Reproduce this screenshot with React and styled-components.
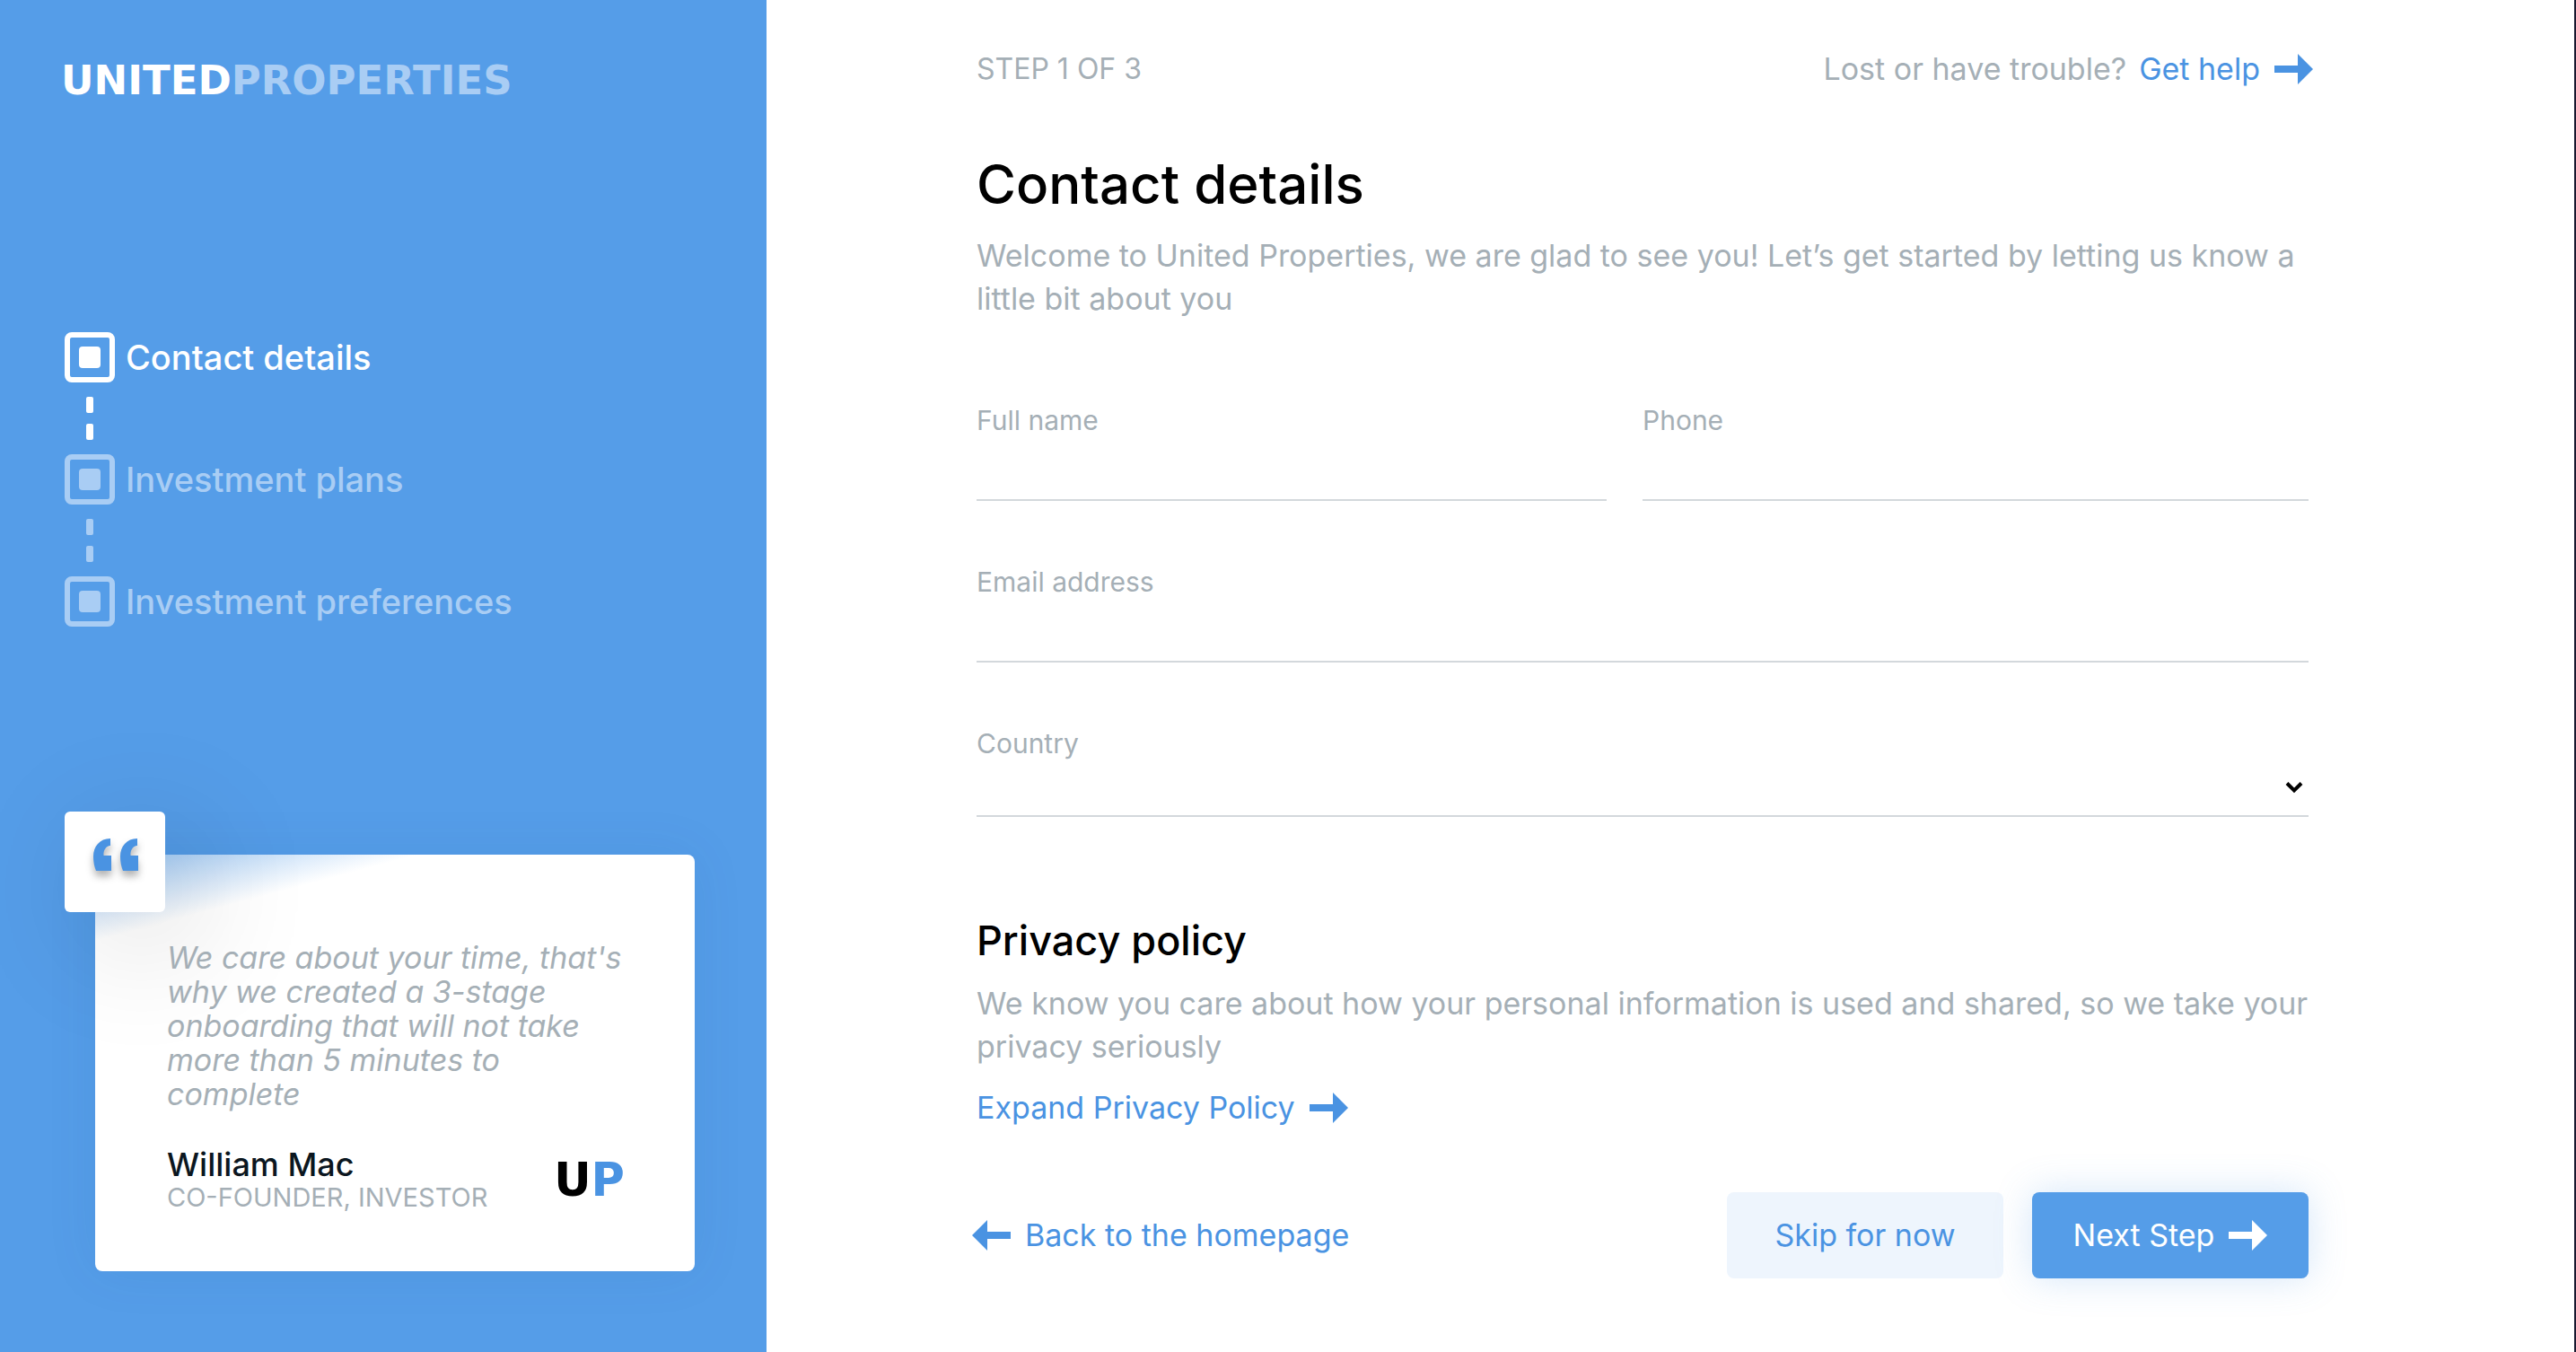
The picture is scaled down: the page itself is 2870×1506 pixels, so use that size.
import React from "react";
import styled, { createGlobalStyle } from "styled-components";

const BLUE = "#559de8";
const LINK = "#4a93e2";
const GREY = "#a5afb6";
const SANS = `Inter, "Liberation Sans", sans-serif`;
const WIDE = `"DejaVu Sans", Inter, sans-serif`;

const GlobalStyle = createGlobalStyle`
  *, *::before, *::after { box-sizing: border-box; }
  body { margin: 0; background: #fff; font-family: ${SANS}; color: #000; }
  h1, h2, p, ol, blockquote { margin: 0; padding: 0; }
  button, input, select { font: inherit; color: inherit; }
`;

const Page = styled.div`
  display: flex;
  min-height: 100vh;
  background: #fff;
  border-right: 2px solid #1a1a30;
`;

const Sidebar = styled.aside`
  flex: 0 0 854px;
  display: flex;
  flex-direction: column;
  background: ${BLUE};
  padding: 64px 80px 90px 68px;
`;

const Logo = styled.div`
  font-family: ${WIDE};
  font-size: 45px;
  line-height: 52px;
  font-weight: 700;
  color: #fff;
  span { color: #a9cdf4; }
`;

const Steps = styled.ol`
  list-style: none;
  margin: 254px 0 0 4px;
  display: flex;
  flex-direction: column;
`;

const Step = styled.li`
  color: ${(p) => (p.$active ? "#fff" : "#a9cdf4")};
`;

const StepLine = styled.div`
  display: flex;
  align-items: center;
  gap: 12px;
  font-size: 38px;
  line-height: 56px;
  font-weight: 500;
`;

const StepBox = styled.span`
  width: 56px;
  height: 56px;
  border: 6px solid currentColor;
  border-radius: 8px;
  display: grid;
  place-items: center;
  &::before {
    content: "";
    width: 24px;
    height: 24px;
    border-radius: 4px;
    background: currentColor;
  }
`;

const Dashes = styled.div`
  width: 56px;
  padding: 16px 0;
  display: flex;
  flex-direction: column;
  align-items: center;
  gap: 12px;
`;

const Dash = styled.span`
  width: 8px;
  height: 18px;
  border-radius: 2px;
  background: currentColor;
`;

const Card = styled.figure`
  position: relative;
  margin: auto 0 0 38px;
  padding: 96px 78px 64px 80px;
  border-radius: 8px;
  background: linear-gradient(165deg, #8fbff1 0%, #fff 15%);
  box-shadow: 0 0 60px rgba(30, 80, 140, 0.08);
`;

const QuoteBadge = styled.div`
  position: absolute;
  left: -34px;
  top: -48px;
  width: 112px;
  height: 112px;
  padding: 0 0 16px 2px;
  border-radius: 6px;
  background: #fff;
  display: grid;
  place-items: center;
  box-shadow: 30px 30px 140px rgba(0, 0, 0, 0.16);
  svg { filter: drop-shadow(0 6px 4px rgba(0, 0, 0, 0.3)); }
`;

const Quote = styled.blockquote`
  position: relative;
  font-size: 34px;
  line-height: 38px;
  font-style: italic;
  color: ${GREY};
`;

const Author = styled.figcaption`
  position: relative;
  margin-top: 40px;
  display: flex;
  align-items: center;
  justify-content: space-between;
`;

const AuthorName = styled.div`
  font-size: 36px;
  line-height: 38px;
  font-weight: 500;
  color: #0b1620;
`;

const AuthorRole = styled.div`
  font-size: 29px;
  line-height: 36px;
  color: ${GREY};
`;

const Mark = styled.div`
  font-family: ${WIDE};
  font-size: 51px;
  line-height: 60px;
  font-weight: 700;
  span { color: ${LINK}; }
`;

const Main = styled.main`
  flex: 1;
  padding: 53px 296px 82px 234px;
  display: flex;
  flex-direction: column;
`;

const TopBar = styled.header`
  display: flex;
  justify-content: space-between;
  font-size: 34px;
  line-height: 48px;
  color: ${GREY};
`;

const StepCount = styled.span`
  font-size: 32px;
`;

const Help = styled.div`
  display: flex;
  gap: 14px;
  margin-right: -5px;
`;

const Link = styled.a`
  display: inline-flex;
  align-items: center;
  align-self: flex-start;
  gap: 16px;
  margin-left: ${(p) => (p.$back ? "-5px" : "0")};
  font-size: 34px;
  line-height: 48px;
  color: ${LINK};
  text-decoration: none;
`;

const Title = styled.h1`
  margin-top: 68px;
  font-size: 60px;
  line-height: 72px;
  font-weight: 500;
`;

const Subtitle = styled.h2`
  margin-top: 112px;
  font-size: 45px;
  line-height: 52px;
  font-weight: 500;
`;

const Text = styled.p`
  margin-top: 20px;
  font-size: 34px;
  line-height: 48px;
  color: ${GREY};
`;

const Fields = styled.form`
  margin-top: 93px;
  display: grid;
  grid-template-columns: 1fr 1fr;
  row-gap: 72px;
`;

const Field = styled.div`
  display: flex;
  flex-direction: column;
  grid-column: ${(p) => (p.$wide ? "1 / -1" : "auto")};
  padding-right: ${(p) => (p.$gutter ? "40px" : "0")};
`;

const Label = styled.label`
  font-size: 30px;
  line-height: 36px;
  color: ${GREY};
`;

const Input = styled.input`
  width: 100%;
  height: 72px;
  padding: 0;
  border: 0;
  border-bottom: 2px solid #d3d8dc;
  border-radius: 0;
  background: transparent;
  font-size: 34px;
  outline: 0;
`;

const SelectWrap = styled.div`
  display: grid;
  align-items: center;
  border-bottom: 2px solid #d3d8dc;
  & > * { grid-area: 1 / 1; }
  svg { justify-self: end; margin-right: 6px; pointer-events: none; }
`;

const Select = styled.select`
  appearance: none;
  width: 100%;
  height: 62px;
  border: 0;
  background: transparent;
  font-size: 34px;
  outline: 0;
`;

const Policy = styled.section`
  display: flex;
  flex-direction: column;
  & > a { margin-top: 20px; }
`;

const Footer = styled.footer`
  margin-top: 70px;
  display: flex;
  align-items: center;
  justify-content: space-between;
  & > a { align-self: center; }
`;

const Actions = styled.div`
  display: flex;
  gap: 32px;
`;

const Button = styled.button`
  width: 308px;
  height: 96px;
  padding: 0;
  display: flex;
  align-items: center;
  justify-content: center;
  gap: 16px;
  border: 0;
  border-radius: 8px;
  font-size: 34px;
  line-height: 48px;
  color: ${(p) => (p.$primary ? "#fff" : LINK)};
  background: ${(p) => (p.$primary ? BLUE : "#eef5fd")};
  box-shadow: ${(p) => (p.$primary ? "0 0 40px rgba(85, 157, 232, 0.25)" : "none")};
`;

function Arrow({ left }) {
  return (
    <svg width="43" height="34" viewBox="0 0 43 34" aria-hidden="true">
      <path
        fill="currentColor"
        d={left ? "M43 13H17V0L0 17l17 17V21h26z" : "M0 13h26V0l17 17-17 17V21H0z"}
      />
    </svg>
  );
}

function QuoteMark() {
  const mark = "M19 0v8c-5 .5-8 5-7.500 11H20v17H3C1 31 0 26 0 20 0 9 7 0 19 0z";
  return (
    <svg width="50" height="36" viewBox="0 0 50 36" fill={LINK} overflow="visible" aria-hidden="true">
      <path d={mark} />
      <path d={mark} transform="translate(30 0)" />
    </svg>
  );
}

const STEPS = ["Contact details", "Investment plans", "Investment preferences"];

export default function App() {
  return (
    <>
      <GlobalStyle />
      <Page>
        <Sidebar>
          <Logo>UNITED<span>PROPERTIES</span></Logo>
          <Steps>
            {STEPS.map((name, i) => (
              <Step key={name} $active={i === 0}>
                <StepLine><StepBox />{name}</StepLine>
                {i < STEPS.length - 1 && <Dashes><Dash /><Dash /></Dashes>}
              </Step>
            ))}
          </Steps>
          <Card>
            <QuoteBadge><QuoteMark /></QuoteBadge>
            <Quote>
              We care about your time, that's why we created a 3-stage onboarding
              that will not take more than 5 minutes to complete
            </Quote>
            <Author>
              <div>
                <AuthorName>William Mac</AuthorName>
                <AuthorRole>CO-FOUNDER, INVESTOR</AuthorRole>
              </div>
              <Mark>U<span>P</span></Mark>
            </Author>
          </Card>
        </Sidebar>
        <Main>
          <TopBar>
            <StepCount>STEP 1 OF 3</StepCount>
            <Help>
              Lost or have trouble?
              <Link href="#help">Get help<Arrow /></Link>
            </Help>
          </TopBar>
          <Title>Contact details</Title>
          <Text>
            Welcome to United Properties, we are glad to see you! Let’s get started by
            letting us know a little bit about you
          </Text>
          <Fields id="contact">
            <Field $gutter>
              <Label htmlFor="name">Full name</Label>
              <Input id="name" type="text" />
            </Field>
            <Field>
              <Label htmlFor="phone">Phone</Label>
              <Input id="phone" type="tel" />
            </Field>
            <Field $wide>
              <Label htmlFor="email">Email address</Label>
              <Input id="email" type="email" />
            </Field>
            <Field $wide>
              <Label htmlFor="country">Country</Label>
              <SelectWrap>
                <Select id="country" defaultValue=""><option value="" /></Select>
                <svg width="20" height="14" viewBox="0 0 20 14" aria-hidden="true">
                  <path d="M2 2.500l8 8 8-8" fill="none" stroke="#000" strokeWidth="4" />
                </svg>
              </SelectWrap>
            </Field>
          </Fields>
          <Policy>
            <Subtitle>Privacy policy</Subtitle>
            <Text>
              We know you care about how your personal information is used and shared, so
              we take your privacy seriously
            </Text>
            <Link href="#privacy">Expand Privacy Policy<Arrow /></Link>
          </Policy>
          <Footer>
            <Link href="#home" $back><Arrow left />Back to the homepage</Link>
            <Actions>
              <Button type="button">Skip for now</Button>
              <Button type="submit" form="contact" $primary>Next Step<Arrow /></Button>
            </Actions>
          </Footer>
        </Main>
      </Page>
    </>
  );
}
